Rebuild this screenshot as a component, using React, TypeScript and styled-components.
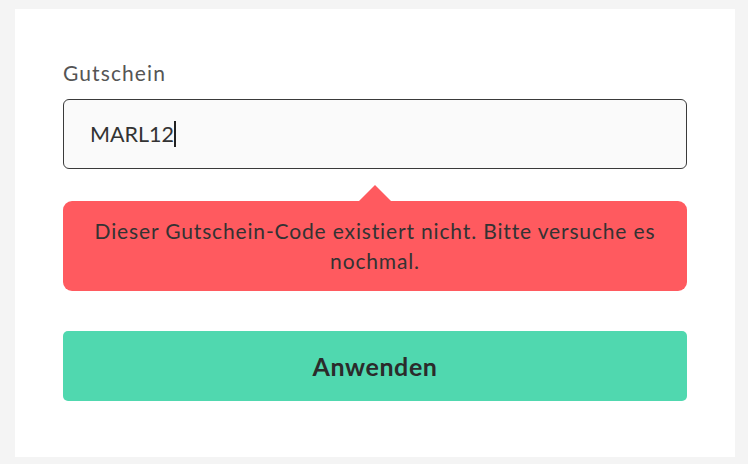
import React from "react";
import styled, { createGlobalStyle } from "styled-components";

const Global = createGlobalStyle`
  html, body { margin: 0; padding: 0; background: #f4f4f4; }
  body { font-family: Lato, "Noto Sans", sans-serif; }
`;

const Page = styled.div`
  width: 748px;
  height: 464px;
  padding: 9px 13px 7px 15px;
  box-sizing: border-box;
`;

const Card = styled.div`
  background: #ffffff;
  width: 720px;
  height: 448px;
  box-sizing: border-box;
  padding: 52px 48px 0 48px;
  display: flex;
  flex-direction: column;
`;

const Label = styled.label`
  font-size: 21px;
  line-height: 24px;
  color: #555555;
  letter-spacing: 1.1px;
`;

const Field = styled.div`
  margin-top: 14px;
  height: 70px;
  box-sizing: border-box;
  border: 1px solid #3a3a3a;
  border-radius: 6px;
  background: #fafafa;
  display: flex;
  align-items: center;
  padding-left: 26px;
  font-size: 21.5px;
  color: #333333;
  letter-spacing: 0;
`;

const Caret = styled.span`
  display: inline-block;
  width: 2px;
  height: 26px;
  background: #222;
  margin-left: 0;
`;

const Tooltip = styled.div`
  position: relative;
  margin-top: 32px;
  height: 90px;
  box-sizing: border-box;
  background: #ff5a5f;
  border-radius: 9px;
  display: flex;
  align-items: center;
  justify-content: center;
  text-align: center;
  padding: 0 26px;
  font-size: 21px;
  line-height: 30px;
  color: #333333;
  letter-spacing: 0.85px;
  &::before {
    content: "";
    position: absolute;
    left: 296px;
    top: -16px;
    border-left: 16px solid transparent;
    border-right: 16px solid transparent;
    border-bottom: 16px solid #ff5a5f;
  }
`;

const Button = styled.button`
  margin-top: 40px;
  height: 70px;
  border: none;
  border-radius: 5px;
  background: #50d8af;
  color: #2b2b2b;
  font-family: Lato, "Noto Sans", sans-serif;
  font-weight: 700;
  font-size: 25px;
  letter-spacing: 0.6px;
  cursor: pointer;
`;

export default function App() {
  return (
    <>
      <Global />
      <Page>
        <Card>
          <Label>Gutschein</Label>
          <Field>
            MARL12
            <Caret />
          </Field>
          <Tooltip>Dieser Gutschein-Code existiert nicht. Bitte versuche es nochmal.</Tooltip>
          <Button>Anwenden</Button>
        </Card>
      </Page>
    </>
  );
}
